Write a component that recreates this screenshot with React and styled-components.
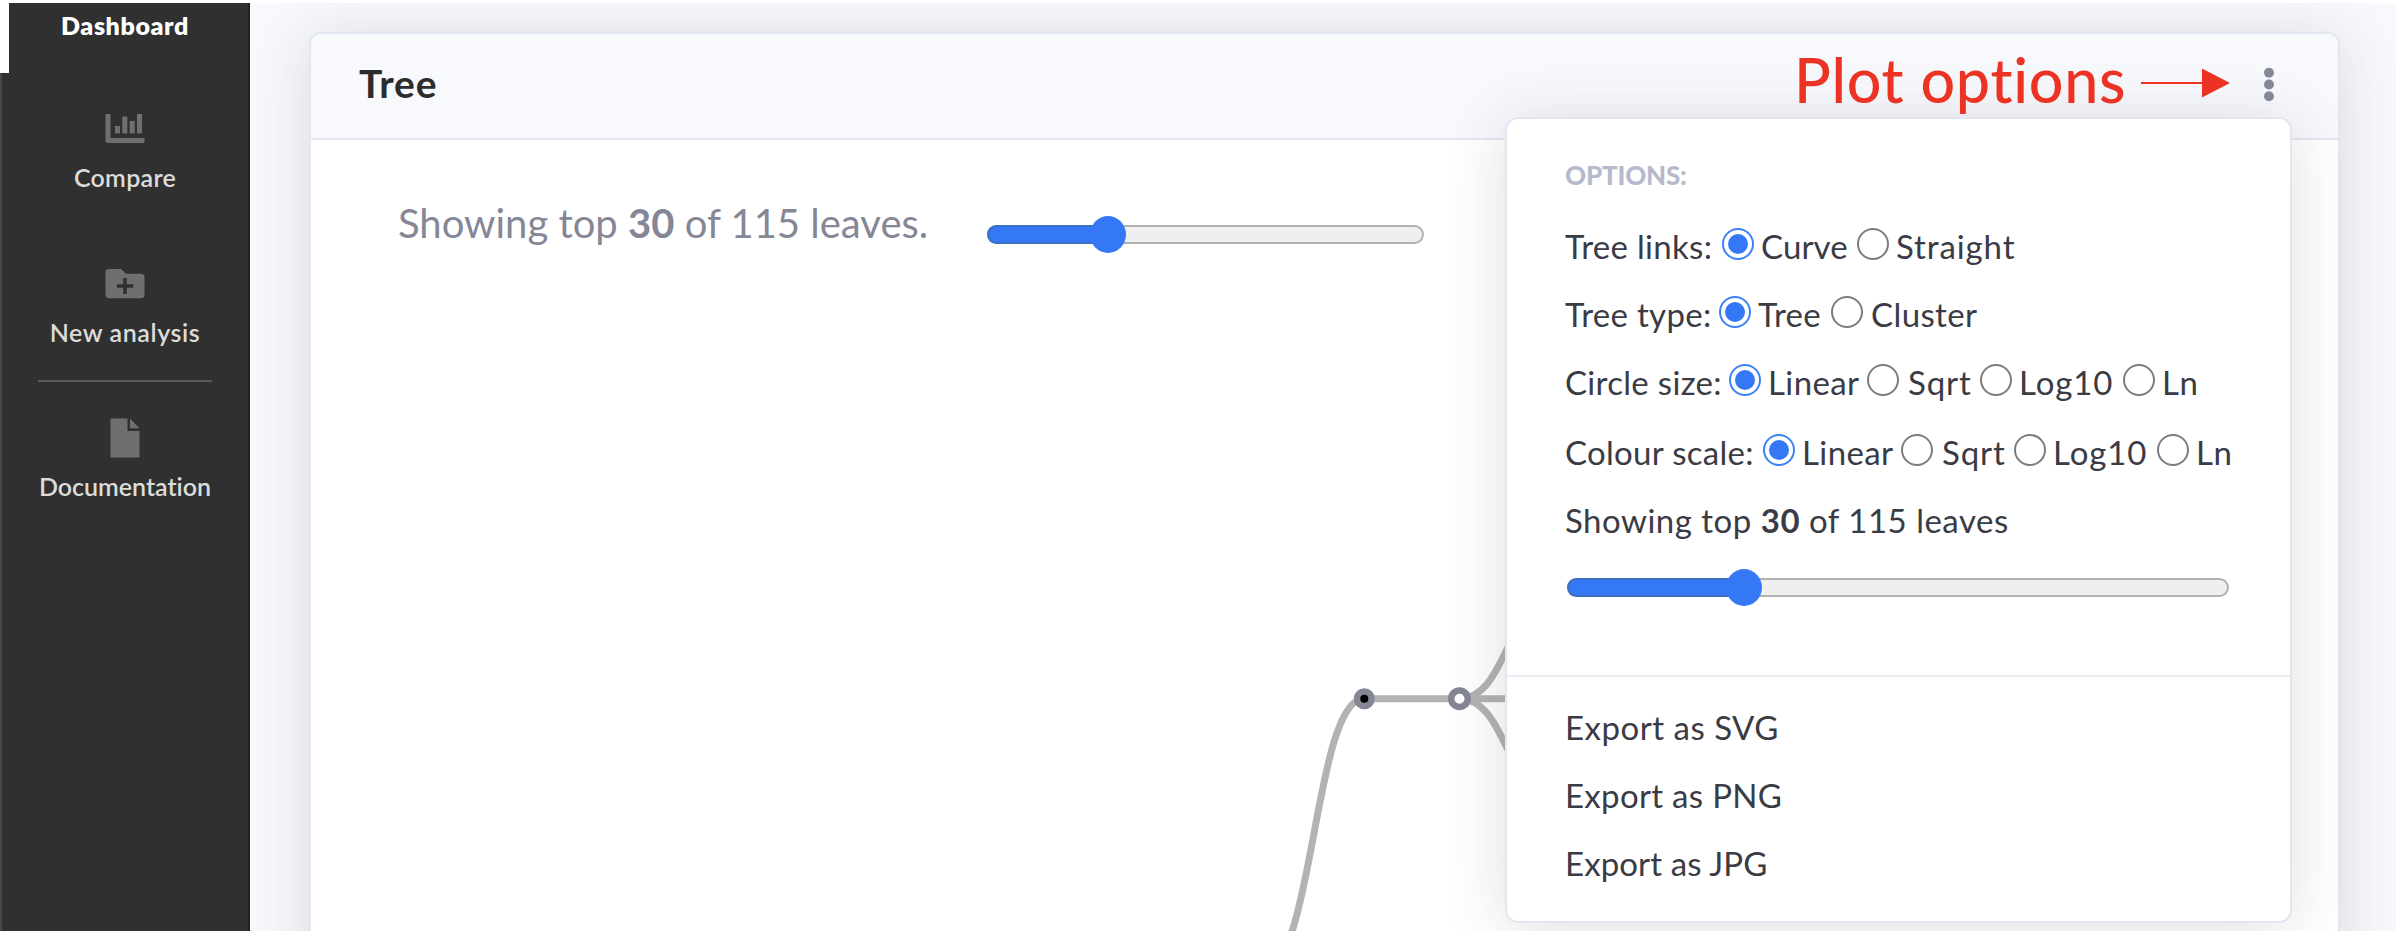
import React from "react";
import styled, { createGlobalStyle } from "styled-components";

const GlobalStyle = createGlobalStyle`
  *, *::before, *::after { box-sizing: border-box; }
  body {
    margin: 0;
    background: #fff;
    font-family: Lato, "Open Sans", sans-serif;
    font-variant-ligatures: none;
    overflow: hidden;
  }
`;

const Page = styled.div`
  display: flex;
  width: 2400px;
  height: 932px;
  padding: 3px 4px 1px 0;
  overflow: hidden;
`;

/* ---------- Sidebar ---------- */

const Sidebar = styled.nav`
  position: relative;
  z-index: 1;
  display: flex;
  flex-direction: column;
  align-items: center;
  flex: 0 0 250px;
  padding-top: 7px;
  background: #303030;
  box-shadow: inset 2px 0 0 #484848, inset -2px 0 0 #222;
`;

const ActiveMarker = styled.span`
  position: absolute;
  top: 0;
  left: 0;
  width: 9px;
  height: 70px;
  background: #fff;
`;

const NavItem = styled.a`
  display: flex;
  flex-direction: column;
  align-items: center;
  gap: 13px;
  margin-top: ${(p) => p.$top || 0}px;
  color: ${(p) => (p.$active ? "#fff" : "#dcdcdc")};
`;

const NavIcon = styled.svg`
  width: 40px;
  height: 40px;
  fill: #6f6f6f;
`;

const NavLabel = styled.span`
  font-size: 25px;
  line-height: 30px;
  font-weight: ${(p) => (p.$bold ? 800 : 600)};
  letter-spacing: ${(p) => p.$track || 0}px;
  white-space: nowrap;
`;

const NavDivider = styled.hr`
  width: 174px;
  height: 2px;
  margin: 33px 0 0;
  border: 0;
  background: #595959;
`;

/* ---------- Card ---------- */

const Main = styled.main`
  flex: 1;
  display: flex;
  padding: 29px 56px 0 59px;
  background: #f8f9fc;
  overflow: hidden;
`;

const Card = styled.section`
  position: relative;
  flex: 1;
  height: 960px;
  border: 2px solid #e3e6f0;
  border-radius: 12px;
  background: #fff;
  box-shadow: 0 5px 62px rgba(58, 59, 60, 0.16);
`;

const CardHeader = styled.header`
  display: flex;
  align-items: flex-start;
  height: 106px;
  padding: 0 64px 0 48px;
  border-bottom: 2px solid #e3e6f0;
  border-radius: 10px 10px 0 0;
  background: #f8f9fd;
`;

const CardTitle = styled.h6`
  flex: 1;
  margin: 25px 0 0;
  font-size: 39px;
  line-height: 48px;
  font-weight: 700;
  letter-spacing: 0.8px;
  color: #2c2c2c;
`;

const Annotation = styled.div`
  position: relative;
  z-index: 3;
  display: flex;
  align-items: center;
  gap: 14px;
  margin-top: 10px;
  margin-right: 34px;
  color: #ec3323;
`;

const AnnotationText = styled.span`
  width: 333px;
  font-size: 61px;
  line-height: 72px;
  font-weight: 500;
  letter-spacing: 0.7px;
  white-space: nowrap;
`;

const AnnotationArrow = styled.svg`
  width: 89px;
  height: 30px;
  margin-top: 6px;
  fill: currentColor;
`;

const MenuButton = styled.button`
  position: relative;
  z-index: 3;
  display: flex;
  margin: 33px 0 0;
  padding: 0;
  border: 0;
  background: none;
`;

const CardBody = styled.div`
  display: flex;
  flex-direction: column;
  gap: 13px;
  padding-top: 59px;
`;

const LeafSummary = styled.div`
  display: flex;
  align-items: flex-start;
  height: 48px;
  padding-left: 87px;
`;

const LeafText = styled.p`
  width: 589px;
  margin: 0;
  font-size: 40px;
  line-height: 48px;
  color: #858796;
  white-space: nowrap;
`;

const PlotCanvas = styled.svg`
  display: block;
  width: 2027px;
  height: 672px;
`;

/* ---------- Slider ---------- */

const Track = styled.div`
  position: relative;
  width: ${(p) => p.$width}px;
  height: 19px;
  margin-top: ${(p) => p.$top}px;
  margin-left: ${(p) => p.$left || 0}px;
  border: 2px solid #b2b2b2;
  border-radius: 10px;
  background: #efefef;
`;

const Fill = styled.div`
  position: absolute;
  top: -2px;
  left: -2px;
  height: 19px;
  border: 2px solid #3a6fc4;
  border-right: 0;
  border-radius: 10px 0 0 10px;
  background: #3478f6;
`;

const Thumb = styled.div`
  position: absolute;
  top: -11px;
  width: 36px;
  height: 37px;
  margin-left: -21px;
  border-radius: 50%;
  background: #3478f6;
`;

function Slider({ width, top, left, value }) {
  const x = Math.round(width * value);
  return (
    <Track $width={width} $top={top} $left={left}>
      <Fill style={{ width: x }} />
      <Thumb style={{ left: x }} />
    </Track>
  );
}

/* ---------- Options menu ---------- */

const Menu = styled.div`
  position: absolute;
  z-index: 2;
  top: 83px;
  right: 46px;
  width: 787px;
  height: 806px;
  padding-top: 40px;
  border: 2px solid #e3e6f0;
  border-radius: 13px;
  background: #fff;
  color: #3a3b45;
  font-size: 33px;
  box-shadow: 0 5px 62px rgba(58, 59, 60, 0.16);
`;

const MenuSection = styled.div`
  display: flex;
  flex-direction: column;
  padding-left: 58px;
`;

const MenuHeading = styled.div`
  margin-bottom: 21px;
  font-size: 26px;
  line-height: 32px;
  font-weight: 900;
  letter-spacing: -0.2px;
  color: #b7b9cc;
`;

const MenuRow = styled.div`
  display: flex;
  align-items: center;
  height: 68px;
  margin-top: ${(p) => p.$top || 0}px;
  letter-spacing: ${(p) => p.$track || 0}px;
  white-space: pre;
`;

const RowLabel = styled.span`
  flex: 0 0 ${(p) => p.$width}px;
  letter-spacing: 0.3px;
`;

const Choice = styled.label`
  display: flex;
  align-items: center;
  gap: ${(p) => p.$gap || 7}px;
  flex: 0 0 ${(p) => p.$width}px;
  letter-spacing: ${(p) => p.$track}px;
`;

const Radio = styled.span`
  display: flex;
  align-items: center;
  justify-content: center;
  width: 32px;
  height: 32px;
  margin-bottom: 5px;
  border: 2px solid ${(p) => (p.$on ? "#3b82f8" : "#7c7c7c")};
  border-radius: 50%;

  &::after {
    content: "";
    width: 20px;
    height: 20px;
    border-radius: 50%;
    background: ${(p) => (p.$on ? "#3478f6" : "transparent")};
  }
`;

const MenuDivider = styled.hr`
  height: 2px;
  margin: 78px 0 16px;
  border: 0;
  background: #eaecf4;
`;

const scaleChoices = [
  ["Linear", 138, 0.4],
  ["Sqrt", 113, 0.9, 9],
  ["Log10", 143, 0.9],
  ["Ln", 80, 0.5],
];

const optionRows = [
  { label: "Tree links:", width: 157, choices: [["Curve", 135, 0.1], ["Straight", 160, 0.9]] },
  { label: "Tree type:", width: 154, choices: [["Tree", 112, 0.2], ["Cluster", 150, 0.4, 8]] },
  { label: "Circle size:", width: 164, choices: scaleChoices },
  { label: "Colour scale:", width: 198, choices: scaleChoices, top: 2 },
];

const exportRows = [
  ["Export as SVG", 0.5],
  ["Export as PNG", 0.3],
  ["Export as JPG", 0.1],
];

function OptionsMenu() {
  return (
    <Menu>
      <MenuSection>
        <MenuHeading>OPTIONS:</MenuHeading>
        {optionRows.map((row) => (
          <MenuRow key={row.label} $top={row.top}>
            <RowLabel $width={row.width}>{row.label}</RowLabel>
            {row.choices.map(([name, width, track, gap], i) => (
              <Choice key={name} $width={width} $track={track} $gap={gap}>
                <Radio $on={i === 0} />
                {name}
              </Choice>
            ))}
          </MenuRow>
        ))}
        <MenuRow $track={0.5}>
          Showing top <b>30</b> of 115 leaves
        </MenuRow>
        <Slider width={662} top={24} left={2} value={0.269} />
      </MenuSection>
      <MenuDivider />
      <MenuSection>
        {exportRows.map(([name, track]) => (
          <MenuRow key={name} $track={track}>
            {name}
          </MenuRow>
        ))}
      </MenuSection>
    </Menu>
  );
}

/* ---------- Tree plot ---------- */

function TreePlot() {
  return (
    <PlotCanvas viewBox="311 260 2027 672">
      <g fill="none" stroke="#b3b3b3" strokeWidth="7">
        <path d="M1264 968C1314 968 1314 698.7 1364 698.7" />
        <path d="M1364 698.7H1555" />
        <path d="M1459.5 698.7C1507 698.7 1507 600 1554.5 600" />
        <path d="M1459.5 698.7C1507 698.7 1507 797 1554.5 797" />
      </g>
      <g stroke="#858796" strokeWidth="6.5">
        <circle cx="1364.3" cy="698.7" r="7.3" fill="#000" />
        <circle cx="1459.5" cy="698.7" r="8.3" fill="#fff" />
      </g>
    </PlotCanvas>
  );
}

export default function App() {
  return (
    <>
      <GlobalStyle />
      <Page>
        <Sidebar>
          <ActiveMarker />
          <NavItem $active>
            <NavLabel $bold $track={0.6}>Dashboard</NavLabel>
          </NavItem>
          <NavItem $top={69}>
            <NavIcon viewBox="0 0 40 40">
              <path d="M.5 5h5v24H39.500v5H3q-2.500 0-2.500-2.500zM10 17h5v7.500h-5zM17.300 7.500h5v17h-5zM24.700 12h5v12.500h-5zM32 5h5v19.500h-5z" />
            </NavIcon>
            <NavLabel $track={0.3}>Compare</NavLabel>
          </NavItem>
          <NavItem $top={72}>
            <NavIcon viewBox="0 0 40 40">
              <path
                fillRule="evenodd"
                d="M4 5H16L21 9.800H36Q39.500 9.800 39.500 13.500V30.500Q39.500 34.200 36 34.200H4Q.5 34.200.5 30.500V8.500Q.5 5 4 5ZM18.200 14V20.200H11.800V23.800H18.200V30H21.800V23.800H28.200V20.200H21.800V14Z"
              />
            </NavIcon>
            <NavLabel $track={0.6}>New analysis</NavLabel>
          </NavItem>
          <NavDivider />
          <NavItem $top={36}>
            <NavIcon viewBox="0 0 40 40">
              <path d="M6.500.5H22.500V13H34.500V39.500H5.500V1.500Q5.500.5 6.500.5ZM25 .5 34.500 10.300H25Z" />
            </NavIcon>
            <NavLabel>Documentation</NavLabel>
          </NavItem>
        </Sidebar>
        <Main>
          <Card>
            <CardHeader>
              <CardTitle>Tree</CardTitle>
              <Annotation>
                <AnnotationText>Plot options</AnnotationText>
                <AnnotationArrow viewBox="0 0 89 30">
                  <path d="M0 14H61V0.500L89 15 61 29.500V16H0Z" />
                </AnnotationArrow>
              </Annotation>
              <MenuButton aria-label="Plot options">
                <svg width="10" height="36" viewBox="0 0 10 36" fill="#858796">
                  <circle cx="5" cy="5.700" r="5" />
                  <circle cx="5" cy="17.500" r="5" />
                  <circle cx="5" cy="29.300" r="5" />
                </svg>
              </MenuButton>
            </CardHeader>
            <CardBody>
              <LeafSummary>
                <LeafText>
                  Showing top <b>30</b> of 115 leaves.
                </LeafText>
                <Slider width={437} top={26} value={0.28} />
              </LeafSummary>
              <TreePlot />
            </CardBody>
            <OptionsMenu />
          </Card>
        </Main>
      </Page>
    </>
  );
}
